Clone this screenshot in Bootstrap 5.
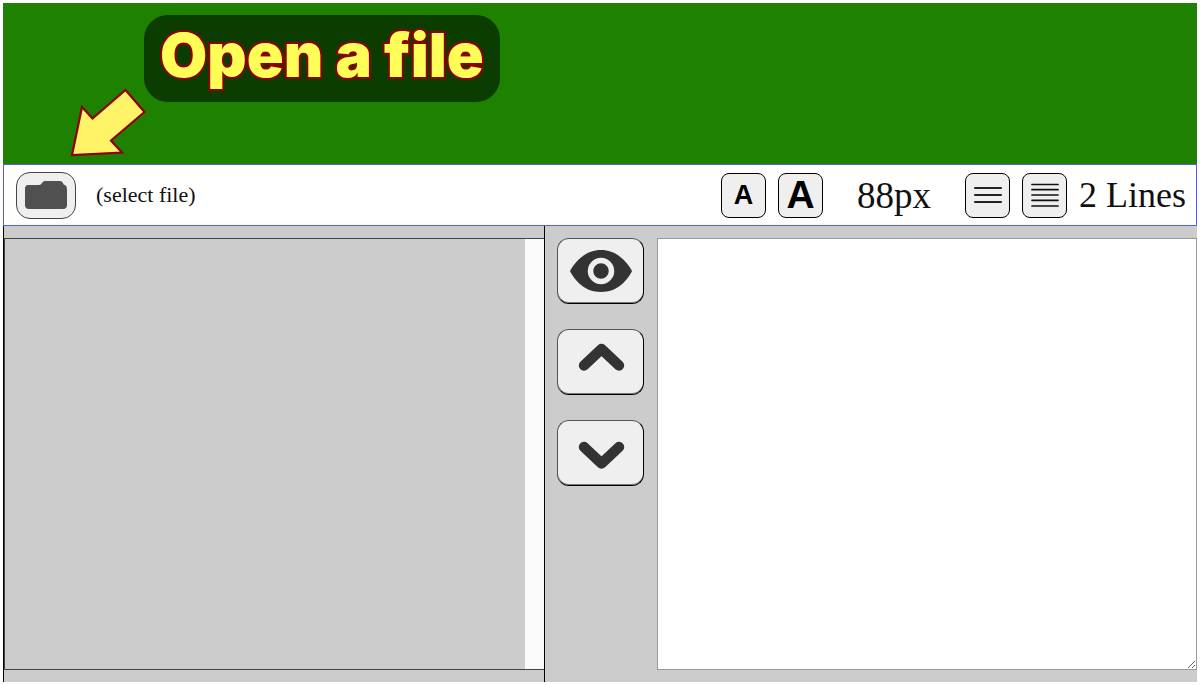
<!DOCTYPE html>
<html lang="en">
<head>
<meta charset="utf-8">
<meta name="viewport" content="width=device-width, initial-scale=1">
<title>Prompter editor</title>
<link rel="stylesheet" href="https://cdn.jsdelivr.net/npm/bootstrap@5.3.0/dist/css/bootstrap.min.css">
<style>
  body { font-family: "Liberation Serif", "Times New Roman", serif; color: #111; background: #fff; }
  .page { padding: 3px; }
  .stage { height: 161px; background: #1e8200; }
  .callout { left: 141px; top: 12px; height: 87px; padding: 0 16px; border-radius: 24px; background: #0b3d00; }
  .callout-text { font: 900 61px/80px Inter, sans-serif; color: #ffff57; -webkit-text-stroke: 4px #900000; paint-order: stroke fill; white-space: nowrap; }
  .pointer { left: 66px; top: 84px; }
  .toolbar { height: 62px; padding: 0 10px 0 12px; border: 1px solid #5a5af5; background: #fff; }
  .tool { background: #efefef; border: 1px solid #000; color: #000; padding: 0; display: flex; align-items: center; justify-content: center; }
  .tool-file { width: 60px; height: 47px; border-color: #444; border-radius: 14px; }
  .tool-small { width: 45px; height: 45px; border-radius: 8px; font-family: "Liberation Sans", Arial, sans-serif; font-weight: 700; }
  .tool-pair { display: flex; gap: 12px; }
  .letter-s { font-size: 27px; line-height: 30px; }
  .letter-l { font-size: 39px; line-height: 42px; }
  .tool-side { width: 87px; height: 66px; border: 1px solid #555; border-right-color: #000; border-bottom-color: #000; border-radius: 12px; box-shadow: inset 0 -1px 0 #777; }
  .file-name { font-size: 22px; line-height: 30px; margin-left: 20px; }
  .readout { font-size: 36px; line-height: 45px; white-space: nowrap; }
  .readout-size { font-size: 37px; margin: 0 34px; }
  .readout-lines { margin-left: 12px; }
  .workspace { background: #ccc; }
  .pane { flex: 1 1 0; min-width: 0; padding: 12px 0; }
  .pane-list { border-left: 1px solid #000; }
  .list-box { border: 1px solid #444; border-right: 0; }
  .list-track { width: 19px; background: #fafafa; }
  .side { width: 113px; padding: 12px 0 0 12px; gap: 25px; border-left: 1px solid #000; }
  .editor { border: 1px solid #999; resize: both; padding: 4px; background: #fff; outline: 0; }
</style>
</head>
<body>
<div class="page d-flex flex-column min-vh-100">
  <header class="stage position-relative">
    <div class="callout position-absolute"><div class="callout-text">Open a file</div></div>
    <svg class="pointer position-absolute" width="80" height="74" viewBox="0 0 80 74" aria-hidden="true">
      <path d="M3 68 L13 20 L23.500 31.500 L56.500 3 L75.500 25 L42 53.500 L53 65.500 Z" fill="#fff467" stroke="#900000" stroke-width="2.200"/>
    </svg>
  </header>

  <div class="toolbar d-flex align-items-center">
    <button type="button" class="tool tool-file" aria-label="Open a file">
      <svg width="44" height="30" viewBox="0 0 44 30"><path d="M4 5 H15 Q17 5 18 3 Q19 1 21 1 H36 Q38 1 39 3 Q39 5 41 5 Q43 6 43 9 V25 Q43 29 39 29 H5 Q1 29 1 25 V9 Q1 5 4 5 Z" fill="#505050"/></svg>
    </button>
    <span class="file-name">(select file)</span>
    <div class="d-flex align-items-center ms-auto">
      <div class="tool-pair">
        <button type="button" class="tool tool-small letter-s">A</button>
        <button type="button" class="tool tool-small letter-l">A</button>
      </div>
      <span class="readout readout-size">88px</span>
      <div class="tool-pair">
        <button type="button" class="tool tool-small" aria-label="Fewer lines">
          <svg width="30" height="30" viewBox="0 0 30 30" stroke="#222" stroke-width="2" stroke-linecap="round"><path d="M2 8H28M2 15H28M2 22H28"/></svg>
        </button>
        <button type="button" class="tool tool-small" aria-label="More lines">
          <svg width="30" height="30" viewBox="0 0 30 30" stroke="#111" stroke-width="1.700" stroke-linecap="round"><path d="M2 4.500H28M2 9.700H28M2 15H28M2 20.300H28M2 26H28"/></svg>
        </button>
      </div>
      <span class="readout readout-lines">2 Lines</span>
    </div>
  </div>

  <main class="workspace d-flex flex-grow-1">
    <section class="pane pane-list d-flex">
      <div class="list-box flex-grow-1 d-flex justify-content-end"><div class="list-track"></div></div>
    </section>
    <div class="side d-flex flex-column">
      <button type="button" class="tool tool-side" aria-label="Preview">
        <svg width="62" height="42" viewBox="0 0 62 42"><path d="M0 21 C5 12 15 0 31 0 S57 12 62 21 C57 31 47 42 31 42 S5 31 0 21 Z" fill="#333"/><circle cx="31" cy="21" r="10.500" fill="#333" stroke="#efefef" stroke-width="5.500"/></svg>
      </button>
      <button type="button" class="tool tool-side" aria-label="Move up">
        <svg width="62" height="42" viewBox="0 0 62 42" fill="none" stroke="#333" stroke-width="10.500" stroke-linecap="round" stroke-linejoin="round"><path d="M14 24.500 L31.500 8 L49 24.500"/></svg>
      </button>
      <button type="button" class="tool tool-side" aria-label="Move down">
        <svg width="62" height="42" viewBox="0 0 62 42" fill="none" stroke="#333" stroke-width="10.500" stroke-linecap="round" stroke-linejoin="round"><path d="M14 15 L31.500 31.500 L49 15"/></svg>
      </button>
    </div>
    <section class="pane d-flex">
      <textarea class="editor flex-grow-1" aria-label="Text"></textarea>
    </section>
  </main>
</div>
<script src="https://cdn.jsdelivr.net/npm/bootstrap@5.3.0/dist/js/bootstrap.bundle.min.js"></script>
</body>
</html>
